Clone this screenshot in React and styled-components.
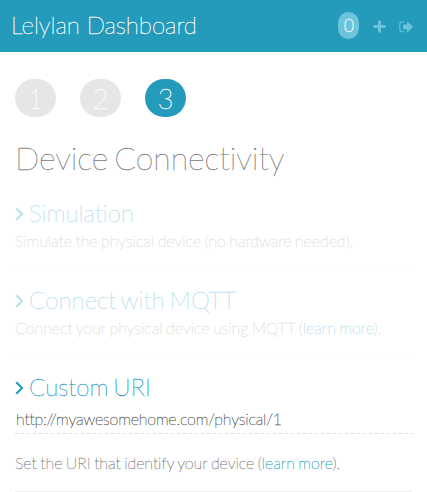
import React from 'react';
import styled, { createGlobalStyle } from 'styled-components';

const Global = createGlobalStyle`
  * { box-sizing: border-box; }
  body {
    margin: 0; background: #fff; font-family: Lato, sans-serif; font-weight: 100; overflow: hidden;
    font-variant-ligatures: none;
  }
`;
const Page = styled.div`height: 492px; overflow: hidden;`;
const Header = styled.header`
  height: 52px; padding: 0 14px 0 11px; background: #249bbb; color: #fff;
  display: flex; align-items: center; justify-content: space-between;
`;
const Brand = styled.div`
  font-size: 24px; line-height: 30px; margin-top: -2px; white-space: nowrap; letter-spacing: -0.03px;
  -webkit-text-stroke: 0.45px #fff; text-shadow: 0 1px 1px rgba(0, 0, 0, 0.3);
`;
const Actions = styled.nav`display: flex; align-items: center; color: #6cc3da;`;
const Count = styled.span`
  width: 21px; height: 27px; border-radius: 10.5px; background: #6cc3da; color: #fff;
  font-size: 17px; line-height: 27px; text-align: center; margin: -1px 14px 0 0; padding-left: 1px;
  -webkit-text-stroke: 0.5px #fff;
`;
const PlusIcon = styled.svg`width: 13px; height: 13px; margin-right: 13px;`;
const ExitIcon = styled.svg`width: 14px; height: 12px; margin-top: 1px;`;
const Main = styled.main`padding: 27px 13px 0 15px;`;
const Steps = styled.div`display: flex; gap: 24px;`;
const Step = styled.div`
  width: 41px; height: 38px; border-radius: 20px; color: #fff;
  background: ${p => (p.$active ? '#249bbb' : '#e6e6e6')};
  font-size: 27px; line-height: 39px; text-align: center;
  -webkit-text-stroke: 0.4px #fff;
`;
const Title = styled.h1`
  margin: 20px 0 0; height: 43px; font-size: 32px; line-height: 41px; font-weight: 100;
  letter-spacing: -0.08px; word-spacing: -3px;
  color: #777; -webkit-text-stroke: 0.3px #777; white-space: nowrap;
`;
const Option = styled.section`
  height: ${p => p.$height}px; margin-top: ${p => p.$gap}px; margin-right: 2px;
  border-bottom: 1px solid ${p => (p.$faded ? '#fcfcfc' : '#f2f2f2')};
`;
const OptionHead = styled.h2`
  margin: 0; height: 30px; display: flex; align-items: flex-start; gap: 5px;
  font-size: 24px; line-height: 27px; font-weight: 100; white-space: nowrap;
  letter-spacing: 0.04px; word-spacing: -2px;
  color: ${p => (p.$faded ? '#b8e1ec' : '#249bbb')}; -webkit-text-stroke: 0.35px currentColor;
`;
const Chevron = styled.svg`width: 9px; height: 14px; margin-top: 8px;`;
const Note = styled.p`
  margin: ${p => p.$top || 0}px 0 0; height: 24px; font-size: 16px; line-height: 24px; white-space: nowrap;
  letter-spacing: -0.04px; word-spacing: -1px;
  color: ${p => (p.$faded ? '#dedede' : '#777')}; -webkit-text-stroke: 0.3px currentColor;
`;
const Link = styled.a`
  color: ${p => (p.$faded ? '#b8e1ec' : '#249bbb')};
  -webkit-text-stroke: 0.3px currentColor;
`;
const Field = styled.div`
  height: 31px; padding-left: 1px; margin-right: -2px; font-size: 16px; line-height: 31px; color: #444;
  letter-spacing: -0.18px; -webkit-text-stroke: 0.3px #444; white-space: nowrap;
  background: repeating-linear-gradient(90deg, #ddd 0 3px, transparent 3px 6px) 0 100% / 100% 1px no-repeat;
`;

function Heading({ faded, children }) {
  return (
    <OptionHead $faded={faded}>
      <Chevron viewBox="0 0 9 14"><path d="M1.2 1.2 7 7l-5.8 5.8" fill="none" stroke="currentColor" strokeWidth="2.1" /></Chevron>
      <span>{children}</span>
    </OptionHead>
  );
}

export default function App() {
  return (
    <Page>
      <Global />
      <Header>
        <Brand>Lelylan Dashboard</Brand>
        <Actions>
          <Count>0</Count>
          <PlusIcon viewBox="0 0 13 13"><path d="M6.5 1.7v9.6M1.7 6.5h9.6" stroke="currentColor" strokeWidth="3" strokeLinecap="round" /></PlusIcon>
          <ExitIcon viewBox="0 0 14 12">
            <path d="M5.5 1H3Q.8 1 .8 3.2v5.4Q.8 10.8 3 10.8h2.5" fill="none" stroke="currentColor" strokeWidth="1.1" />
            <path d="M4 4.2q0-.6.6-.6H8V1.2q0-.9.8-.3l4.9 4.6q.4.4 0 .8L8.8 11q-.8.6-.8-.3V8.2H4.6q-.6 0-.6-.6z" fill="currentColor" />
          </ExitIcon>
        </Actions>
      </Header>
      <Main>
        <Steps><Step>1</Step><Step>2</Step><Step $active>3</Step></Steps>
        <Title>Device Connectivity</Title>
        <Option $faded $height={71} $gap={19}>
          <Heading faded>Simulation</Heading>
          <Note $faded>Simulate the physical device (no hardware needed).</Note>
        </Option>
        <Option $faded $height={71} $gap={16}>
          <Heading faded>Connect with MQTT</Heading>
          <Note $faded>Connect your physical device using MQTT (<Link $faded>learn more</Link>).</Note>
        </Option>
        <Option $height={119} $gap={16}>
          <Heading>Custom URI</Heading>
          <Field>http://myawesomehome.com/physical/1</Field>
          <Note $top={17}>Set the URI that identify your device (<Link>learn more</Link>).</Note>
        </Option>
      </Main>
    </Page>
  );
}
